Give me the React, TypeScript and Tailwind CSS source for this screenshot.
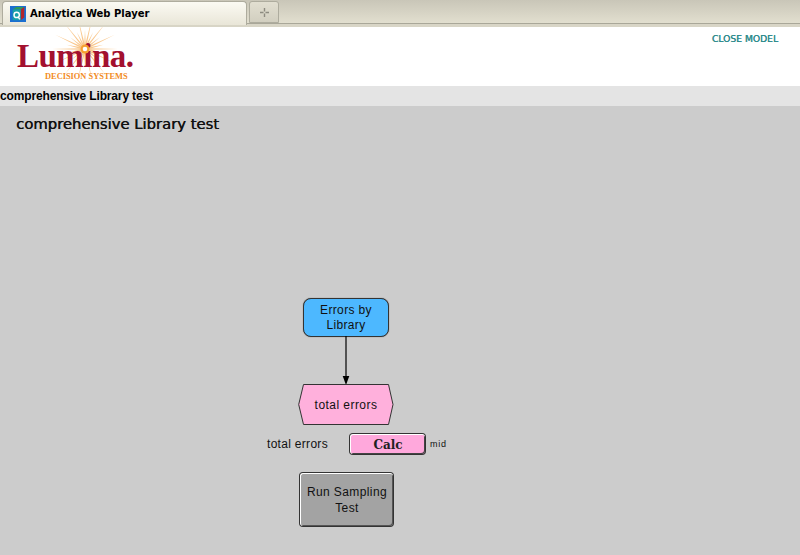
export default function App() {
  const rays = Array.from({ length: 28 }, (_, i) => (i * Math.PI) / 14);
  return (
    <div className="w-[800px] h-[555px] overflow-hidden flex flex-col bg-[#cccccc] font-['Liberation_Sans',sans-serif]">
      {/* Browser tab strip */}
      <div className="h-[27px] shrink-0 flex items-start pl-[2px] gap-[2px] bg-gradient-to-b from-[#c9c6b8] to-[#e3e0d0] border-b-[3px] border-b-[#d8d5c6] shadow-[inset_0_-1px_0_#a9a799]">
        <div className="w-[245px] h-[24px] mt-[1px] flex items-center pl-[7px] gap-[4px] bg-gradient-to-b from-[#fbfaf3] to-[#e9e6d8] border border-[#aeac9e] border-b-0 rounded-t-[4px]">
          <svg width="16" height="16" viewBox="0 0 18 18" className="shrink-0">
            <rect width="18" height="18" fill="#1c6fd0" />
            <polygon points="3,4 7,1 16,1 12,4" fill="#2f9a5a" />
            <polygon points="12,4 16,1 16,13 12,16" fill="#b3262a" />
            <rect x="3" y="4" width="9" height="12" fill="#17a0a8" />
            <circle cx="7.5" cy="10" r="3" fill="none" stroke="#fff" strokeWidth="1.6" />
            <path d="M9 12l2 3" stroke="#fff" strokeWidth="1.6" />
          </svg>
          <span className="text-[10px] font-bold text-black font-['DejaVu_Sans',sans-serif] leading-none">Analytica Web Player</span>
        </div>
        <div className="w-[30px] h-[22px] mt-[1px] flex items-center justify-center bg-gradient-to-b from-[#e2dfd1] to-[#d2cfc0] border border-[#aeac9e] rounded-t-[3px]">
          <svg width="9" height="9" viewBox="0 0 9 9">
            <path d="M4.5 0v3.5M4.5 5.5V9M0 4.5h3.5M5.5 4.5H9" stroke="#8d8b80" strokeWidth="1.4" />
          </svg>
        </div>
      </div>
      {/* Header */}
      <div className="h-[59px] shrink-0 bg-white flex justify-between">
        <div className="relative w-[150px] h-[59px] overflow-hidden">
          <svg width="80" height="60" viewBox="0 0 80 60" className="absolute left-[45px] top-[-4px]">
            {rays.map((a, i) => (
              <polygon
                key={i}
                points={`${40 + (i % 2 ? 19 : 33) * Math.cos(a)},${26 + (i % 2 ? 19 : 33) * Math.sin(a)} ${40 + 4 * Math.cos(a + 0.2)},${26 + 4 * Math.sin(a + 0.2)} ${40 + 4 * Math.cos(a - 0.2)},${26 + 4 * Math.sin(a - 0.2)}`}
                fill="#f9c88e"
              />
            ))}
          </svg>
          <div className="absolute left-[17px] top-[13px] text-[33px] leading-[33px] font-bold text-[#a3102f] font-['Liberation_Serif',serif] tracking-[-0.5px]">Lumina.</div>
          <svg width="12" height="12" viewBox="0 0 12 12" className="absolute left-[79px] top-[16px]">
            <circle cx="6" cy="6" r="4.5" fill="#f5a030" />
            <circle cx="6" cy="6" r="2.3" fill="#fff" />
          </svg>
          <div className="absolute left-[45px] top-[45px] text-[8.4px] leading-[9px] font-bold text-[#f28c1e] font-['Liberation_Serif',serif] whitespace-nowrap">DECISION SYSTEMS</div>
        </div>
        <div className="pt-[6px] pr-[22px] text-[9.2px] leading-[12px] text-[#2e8a8c] font-['DejaVu_Sans',sans-serif] [text-shadow:0.3px_0_0_#2e8a8c]">CLOSE MODEL</div>
      </div>
      {/* Breadcrumb strip */}
      <div className="h-[20px] shrink-0 bg-[#e4e4e4] flex items-center text-[12px] font-bold text-black tracking-[-0.15px]">comprehensive Library test</div>
      {/* Canvas */}
      <div className="relative flex-1">
        <div className="pl-[16px] pt-[9px] text-[14.8px] leading-[18px] text-[#111] font-['DejaVu_Sans',sans-serif] [text-shadow:0.4px_0_0_#111]">comprehensive Library test</div>

        <div className="absolute left-[303px] top-[192px] w-[86px] h-[39px] pt-[1px] flex items-center justify-center text-center bg-[#4db8ff] border border-[#333] rounded-[8px] text-[12px] leading-[15.5px] tracking-[0.35px] text-[#111] shadow-[0_0_1px_#555]">Errors by<br />Library</div>

        <svg width="14" height="56" viewBox="0 0 14 56" className="absolute left-[339px] top-[230px]">
          <line x1="7" y1="0" x2="7" y2="46" stroke="#000" strokeWidth="1.2" />
          <polygon points="3.7,40 10.3,40 7,49" fill="#000" />
        </svg>

        <svg width="96" height="41" viewBox="0 0 96 41" className="absolute left-[298px] top-[278px]">
          <polygon points="5.5,0.5 90.5,0.5 95,20.5 90.5,40.5 5.5,40.5 0.7,20.5" fill="#ffb0dc" stroke="#333" strokeWidth="1" />
        </svg>
        <div className="absolute left-[298px] top-[278px] w-[96px] h-[41px] flex items-center justify-center text-[12px] tracking-[0.45px] text-[#111]">total errors</div>

        <div className="absolute left-[267px] top-[331px] text-[12px] leading-[15px] text-[#111] tracking-[0.3px]">total errors</div>
        <div className="absolute left-[350px] top-[328px] w-[75px] h-[20px] flex items-center justify-center bg-[#ffa8dc] border-t border-l border-white rounded-[3px] shadow-[inset_-1px_-1px_0_#444,0_0_0_1px_#333] text-[12px] font-bold text-[#222] font-['DejaVu_Serif',serif]">Calc</div>
        <div className="absolute left-[430px] top-[333px] text-[9px] leading-[11px] text-[#111] tracking-[0.75px]">mid</div>

        <div className="absolute left-[300px] top-[367px] w-[93px] h-[53px] pt-[1px] flex items-center justify-center text-center bg-[#a3a3a3] border-t border-l border-white rounded-[3px] shadow-[inset_-1px_-1px_0_#555,0_0_0_1px_#333] text-[12px] leading-[15.5px] tracking-[0.4px] text-[#111]">Run Sampling<br />Test</div>
      </div>
    </div>
  );
}
